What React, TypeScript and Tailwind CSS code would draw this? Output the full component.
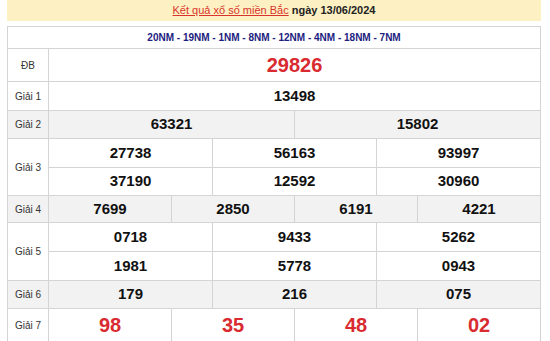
const rows: { label: string; nums: string[][]; big?: boolean; shade?: boolean; h: number }[] = [
  { label: "ĐB", nums: [["29826"]], big: true, h: 33 },
  { label: "Giải 1", nums: [["13498"]], h: 29 },
  { label: "Giải 2", nums: [["63321", "15802"]], shade: true, h: 28 },
  { label: "Giải 3", nums: [["27738", "56163", "93997"], ["37190", "12592", "30960"]], h: 28.5 },
  { label: "Giải 4", nums: [["7699", "2850", "6191", "4221"]], shade: true, h: 27 },
  { label: "Giải 5", nums: [["0718", "9433", "5262"], ["1981", "5778", "0943"]], h: 29 },
  { label: "Giải 6", nums: [["179", "216", "075"]], shade: true, h: 28 },
  { label: "Giải 7", nums: [["98", "35", "48", "02"]], big: true, h: 33 },
];

export default function App() {
  return (
    <div className="w-[550px] h-[341px] overflow-hidden bg-white font-['Liberation_Sans',Arial,sans-serif]">
      <div className="ml-[7px] w-[534px]">
        <div className="h-[21px] bg-[#fdf1c3] flex items-center justify-center text-[11px] text-[#222]">
          <a className="text-[#d8342b] underline">Kết quả xổ số miền Bắc</a>
          <span className="ml-[3px] font-bold">ngày 13/06/2024</span>
        </div>

        <table className="mt-[5px] w-[533px] table-fixed border-collapse">
          <colgroup>
            <col className="w-[41px]" />
            {Array.from({ length: 12 }).map((_, i) => (
              <col key={i} className="w-[41px]" />
            ))}
          </colgroup>
          <tbody>
            <tr>
              <td
                colSpan={13}
                className="h-[22px] border border-[#d4d4d4] text-center text-[10px] font-bold text-[#1c2180]"
              >
                20NM - 19NM - 1NM - 8NM - 12NM - 4NM - 18NM - 7NM
              </td>
            </tr>
            {rows.map((r) =>
              r.nums.map((line, li) => (
                <tr key={r.label + li} className={r.shade ? "bg-[#f2f2f2]" : ""}>
                  {li === 0 && (
                    <td
                      rowSpan={r.nums.length}
                      className="border border-[#d4d4d4] text-center text-[10px] text-[#333]"
                    >
                      {r.label}
                    </td>
                  )}
                  {line.map((n, i) => (
                    <td
                      key={i}
                      colSpan={12 / line.length}
                      style={{ height: r.h }}
                      className={
                        "border border-[#d4d4d4] text-center font-bold p-0 " +
                        (r.big ? "text-[20px] text-[#d92a30]" : "text-[15px] text-[#111]")
                      }
                    >
                      {n}
                    </td>
                  ))}
                </tr>
              ))
            )}
          </tbody>
        </table>
      </div>
    </div>
  );
}
